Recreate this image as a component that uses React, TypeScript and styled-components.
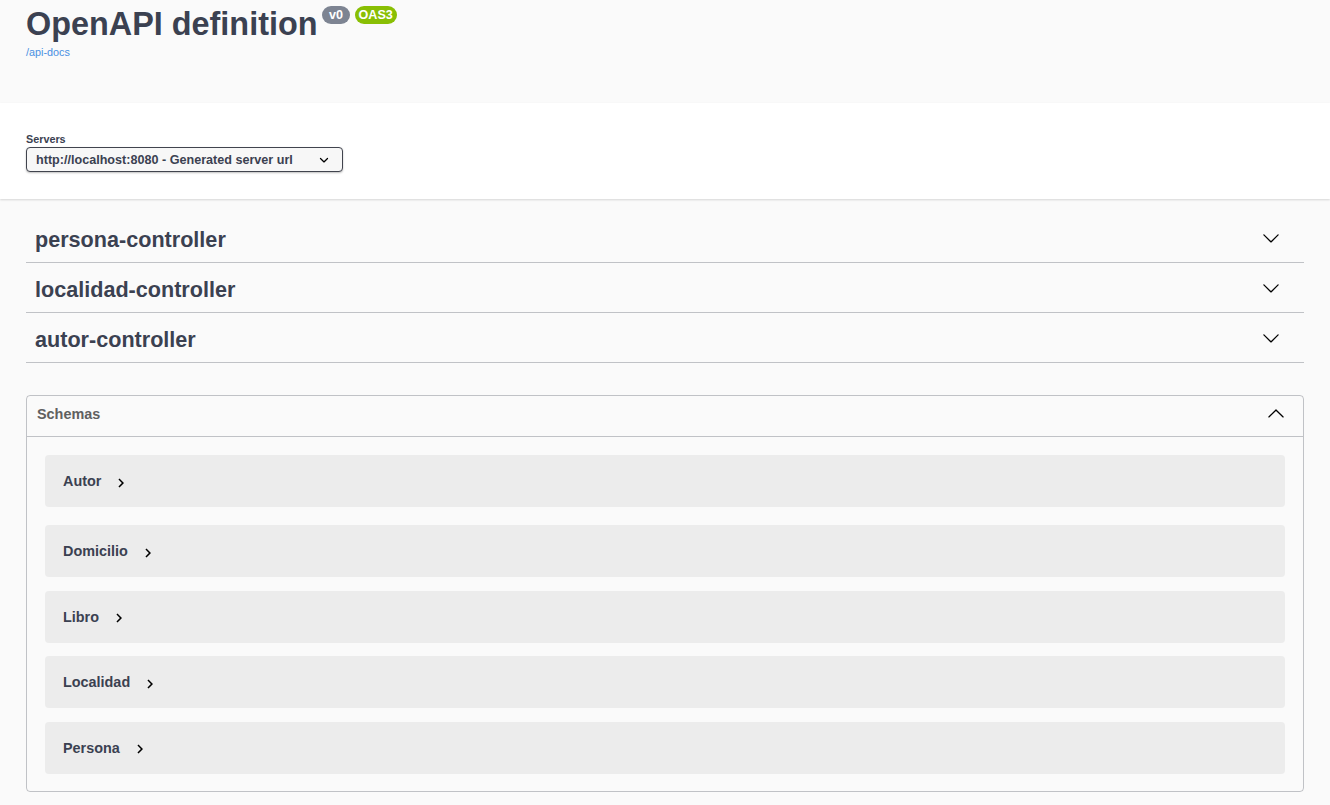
import React from 'react';
import styled, { createGlobalStyle } from 'styled-components';

const GlobalStyle = createGlobalStyle`
  html, body {
    margin: 0;
    padding: 0;
    background: #fafafa;
  }

  body {
    font-family: "Liberation Sans", Arial, Helvetica, sans-serif;
    color: #3b4151;
  }
`;

const Page = styled.div`
  min-height: 100vh;
  background: #fafafa;
`;

const Info = styled.div`
  box-sizing: border-box;
  height: 103px;
  padding: 4px 26px 0;
`;

const Title = styled.h2`
  display: flex;
  align-items: flex-start;
  margin: 0;
  font-size: 32.4px;
  line-height: 40px;
  font-weight: 700;
  color: #3b4151;
`;

const Badge = styled.small<{ $bg: string }>`
  box-sizing: border-box;
  min-width: 28px;
  height: 18px;
  margin: 2px 0 0 4.5px;
  padding: 0 4px;
  border-radius: 57px;
  background: ${p => p.$bg};
  color: #fff;
  font-size: 12.6px;
  line-height: 18px;
  font-weight: 700;
  text-align: center;
`;

const ApiLink = styled.a`
  display: block;
  width: fit-content;
  font-size: 10.8px;
  line-height: 16px;
  color: #4990e2;
  text-decoration: none;
  cursor: pointer;
`;

const SchemeContainer = styled.div`
  background: #fff;
  box-shadow: 0 1px 2px 0 rgba(0, 0, 0, 0.15);
  padding: 28px 26px 27px;
`;

const ServersTitle = styled.span`
  display: block;
  font-size: 10.8px;
  line-height: 16px;
  font-weight: 700;
  color: #3b4151;
`;

const ServerSelect = styled.div`
  box-sizing: border-box;
  display: flex;
  align-items: center;
  justify-content: space-between;
  width: 317px;
  height: 25px;
  padding: 0 9px;
  border: 1px solid #41444e;
  border-radius: 4px;
  background: #f7f7f7;
  box-shadow: 0 1px 2px 0 rgba(0, 0, 0, 0.25);
  font-size: 12.6px;
  font-weight: 700;
  color: #3b4151;
  cursor: pointer;
`;

const TagList = styled.div`
  display: flex;
  flex-direction: column;
  gap: 4px;
  padding: 18px 26px 0;
`;

const TagRow = styled.div`
  box-sizing: border-box;
  display: flex;
  align-items: center;
  justify-content: space-between;
  height: 46px;
  padding: 0 24px 0 9px;
  border-bottom: 1px solid rgba(59, 65, 81, 0.3);
  cursor: pointer;
`;

const TagName = styled.h3`
  margin: 0;
  font-size: 21.6px;
  font-weight: 700;
  color: #3b4151;
`;

const Models = styled.section`
  margin: 32px 26px 0;
  padding-bottom: 17.5px;
  border: 1px solid rgba(59, 65, 81, 0.3);
  border-radius: 4px;
`;

const ModelsHeader = styled.h4`
  box-sizing: border-box;
  display: flex;
  align-items: center;
  justify-content: space-between;
  height: 41px;
  margin: 0;
  padding: 0 18px 4px 10px;
  border-bottom: 1px solid rgba(59, 65, 81, 0.3);
  font-size: 14.4px;
  font-weight: 700;
  color: #606060;
`;

const ModelItem = styled.div`
  display: flex;
  align-items: center;
  height: 52px;
  margin: 0 18px 13.5px;
  padding-left: 18px;
  border-radius: 4px;
  background: #ececec;
  cursor: pointer;

  &:first-of-type {
    margin: 18px;
  }

  &:last-child {
    margin-bottom: 0;
  }
`;

const ModelName = styled.span`
  font-size: 14.4px;
  font-weight: 700;
  color: #3b4151;
`;

const Toggle = styled.svg`
  margin: 3px 0 0 11px;
`;

const ExpandIcon = styled.svg`
  margin-bottom: 3px;
`;

const SelectArrow = () => (
  <svg width="18" height="18" viewBox="0 0 20 20">
    <path
      fill="#000"
      d="M13.418 7.859a.695.695 0 0 1 .978 0 .68.68 0 0 1 0 .969l-3.908 3.83a.697.697 0 0 1-.979 0l-3.908-3.83a.68.68 0 0 1 0-.969.695.695 0 0 1 .978 0L10 11l3.418-3.141z"
    />
  </svg>
);

const ArrowDown = () => (
  <ExpandIcon width="18" height="18" viewBox="0 0 20 20">
    <path
      fill="#000"
      d="M17.418 6.109c.272-.268.709-.268.979 0s.271.701 0 .969l-7.908 7.83c-.27.268-.707.268-.979 0l-7.908-7.83c-.27-.268-.27-.701 0-.969.271-.268.709-.268.979 0L10 13.25l7.418-7.141z"
    />
  </ExpandIcon>
);

const ArrowUp = () => (
  <ExpandIcon width="18" height="18" viewBox="0 0 20 20">
    <path
      fill="#000"
      d="M17.418 14.908c.272.27.709.27.979 0s.271-.694 0-.965l-7.908-7.83c-.27-.268-.707-.268-.979 0l-7.908 7.83c-.27.271-.27.695 0 .965.271.27.709.27.979 0L10 7.723l7.418 7.185z"
    />
  </ExpandIcon>
);

const tags = ['persona-controller', 'localidad-controller', 'autor-controller'];
const schemas = ['Autor', 'Domicilio', 'Libro', 'Localidad', 'Persona'];

const App: React.FC = () => {
  return (
    <Page>
      <GlobalStyle />
      <Info>
        <Title>
          OpenAPI definition
          <Badge $bg="#7d8492">v0</Badge>
          <Badge $bg="#89bf04">OAS3</Badge>
        </Title>
        <ApiLink>/api-docs</ApiLink>
      </Info>

      <SchemeContainer>
        <ServersTitle>Servers</ServersTitle>
        <ServerSelect>
          <span>http://localhost:8080 - Generated server url</span>
          <SelectArrow />
        </ServerSelect>
      </SchemeContainer>

      <TagList>
        {tags.map(tag => (
          <TagRow key={tag}>
            <TagName>{tag}</TagName>
            <ArrowDown />
          </TagRow>
        ))}
      </TagList>

      <Models>
        <ModelsHeader>
          <span>Schemas</span>
          <ArrowUp />
        </ModelsHeader>
        {schemas.map(name => (
          <ModelItem key={name}>
            <ModelName>{name}</ModelName>
            <Toggle width="18" height="18" viewBox="0 0 24 24">
              <path fill="#000" d="M10 6L8.59 7.41 13.17 12l-4.58 4.59L10 18l6-6z" />
            </Toggle>
          </ModelItem>
        ))}
      </Models>
    </Page>
  );
};

export default App;
